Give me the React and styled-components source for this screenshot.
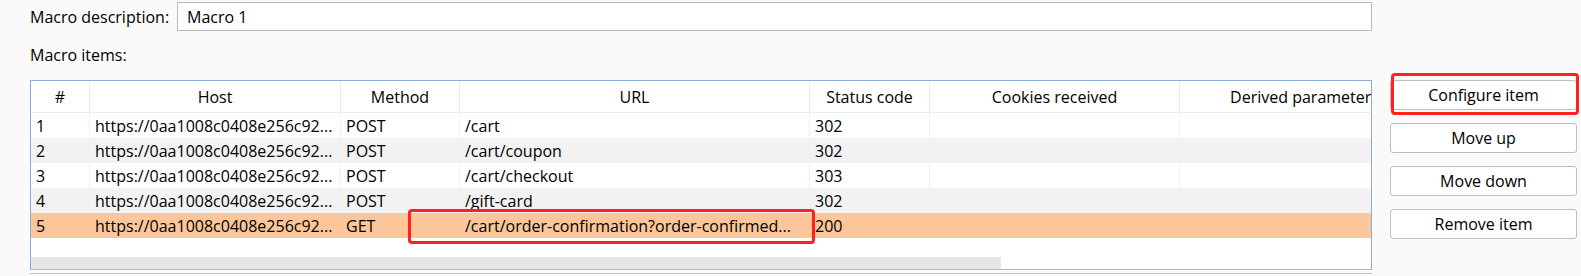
import React from 'react';
import styled, { createGlobalStyle } from 'styled-components';

const GlobalStyle = createGlobalStyle`
  body {
    margin: 0;
    background: #fafafa;
    color: #000;
    font-family: "Open Sans", "Noto Sans", sans-serif;
    font-size: 16px;
  }
`;

const COLUMNS = '59px 251px 119px 350px 120px 250px 250px';

const Page = styled.div`
  display: flex;
  flex-direction: column;
  padding: 2px 0 0 30px;
`;

const DescRow = styled.div`
  display: flex;
  align-items: center;
  gap: 8px;
  width: 1342px;
  height: 29px;
`;

const Label = styled.span`
  white-space: nowrap;
`;

const TextInput = styled.input`
  flex: 1;
  height: 29px;
  box-sizing: border-box;
  border: 1px solid #bdb8bd;
  background: #fff;
  padding: 0 9px;
  font: inherit;
  color: #000;
  outline: none;
`;

const ItemsLabel = styled.div`
  margin-top: 13px;
  line-height: 22px;
`;

const Body = styled.div`
  display: flex;
  gap: 18px;
  margin-top: 14px;
  align-items: flex-start;
`;

const TableColumn = styled.div`
  display: flex;
  flex-direction: column;
  gap: 3px;
`;

const TableFrame = styled.div`
  position: relative;
  width: 1342px;
  height: 190px;
  box-sizing: border-box;
  border: 1px solid #8aaed8;
  border-bottom-color: #b9b5b9;
  background: #fff;
  overflow: hidden;
  display: flex;
  flex-direction: column;
`;

const HeaderRow = styled.div`
  display: grid;
  grid-template-columns: ${COLUMNS};
  height: 32px;
  box-sizing: border-box;
  border-bottom: 1px solid #ececec;
`;

const HeaderCell = styled.div`
  display: flex;
  align-items: center;
  justify-content: center;
  border-right: 1px solid #ececec;
  white-space: nowrap;
  overflow: hidden;
`;

const Row = styled.div`
  display: grid;
  grid-template-columns: ${COLUMNS};
  height: 25px;
  background: ${(p) => (p.$selected ? '#fdc59a' : p.$alt ? '#f2f2f2' : '#fff')};
`;

const Cell = styled.div`
  display: flex;
  align-items: center;
  padding: 0 5px;
  border-right: 1px solid ${(p) => (p.$selected ? 'transparent' : '#f0f0f0')};
  white-space: nowrap;
  overflow: hidden;
`;

const Filler = styled.div`
  flex: 1;
`;

const ScrollTrack = styled.div`
  height: 12px;
  flex: none;
`;

const ScrollThumb = styled.div`
  width: 970px;
  height: 100%;
  background: #e6e6e6;
`;

const BottomLine = styled.div`
  height: 1px;
  width: 1342px;
  background: #c4c0c4;
`;

const Highlight = styled.span`
  position: absolute;
  border: 3px solid #ff2020;
  border-radius: 4px;
  pointer-events: none;
`;

const CellHighlight = styled(Highlight)`
  left: 377px;
  top: 128px;
  width: 401px;
  height: 29px;
`;

const ButtonHighlight = styled(Highlight)`
  top: -7px;
  left: 1px;
  right: -2px;
  bottom: -5px;
`;

const ButtonStack = styled.div`
  display: flex;
  flex-direction: column;
  gap: 13px;
`;

const ButtonWrap = styled.div`
  position: relative;
`;

const Button = styled.button`
  display: block;
  width: 187px;
  height: 30px;
  box-sizing: border-box;
  border: 1px solid #c0bcc0;
  border-radius: 3px;
  background: #fff;
  font: inherit;
  color: #000;
  padding: 0;
`;

const headers = [
  '#',
  'Host',
  'Method',
  'URL',
  'Status code',
  'Cookies received',
  'Derived parameters',
];

const host = 'https://0aa1008c0408e256c92...';

const items = [
  { id: 1, method: 'POST', url: '/cart', status: '302' },
  { id: 2, method: 'POST', url: '/cart/coupon', status: '302' },
  { id: 3, method: 'POST', url: '/cart/checkout', status: '303' },
  { id: 4, method: 'POST', url: '/gift-card', status: '302' },
  {
    id: 5,
    method: 'GET',
    url: '/cart/order-confirmation?order-confirmed...',
    status: '200',
  },
];

const buttons = ['Configure item', 'Move up', 'Move down', 'Remove item'];

export default function App() {
  return (
    <Page>
      <GlobalStyle />
      <DescRow>
        <Label>Macro description:</Label>
        <TextInput defaultValue="Macro 1" />
      </DescRow>
      <ItemsLabel>Macro items:</ItemsLabel>
      <Body>
        <TableColumn>
          <TableFrame>
            <HeaderRow>
              {headers.map((h) => (
                <HeaderCell key={h}>{h}</HeaderCell>
              ))}
            </HeaderRow>
            {items.map((item, i) => {
              const selected = item.id === 5;
              return (
                <Row key={item.id} $alt={i % 2 === 1} $selected={selected}>
                  <Cell $selected={selected}>{item.id}</Cell>
                  <Cell $selected={selected}>{host}</Cell>
                  <Cell $selected={selected}>{item.method}</Cell>
                  <Cell $selected={selected}>{item.url}</Cell>
                  <Cell $selected={selected}>{item.status}</Cell>
                  <Cell $selected={selected} />
                  <Cell $selected={selected} />
                </Row>
              );
            })}
            <Filler />
            <ScrollTrack>
              <ScrollThumb />
            </ScrollTrack>
            <CellHighlight />
          </TableFrame>
          <BottomLine />
        </TableColumn>
        <ButtonStack>
          {buttons.map((b, i) => (
            <ButtonWrap key={b}>
              <Button>{b}</Button>
              {i === 0 && <ButtonHighlight />}
            </ButtonWrap>
          ))}
        </ButtonStack>
      </Body>
    </Page>
  );
}
